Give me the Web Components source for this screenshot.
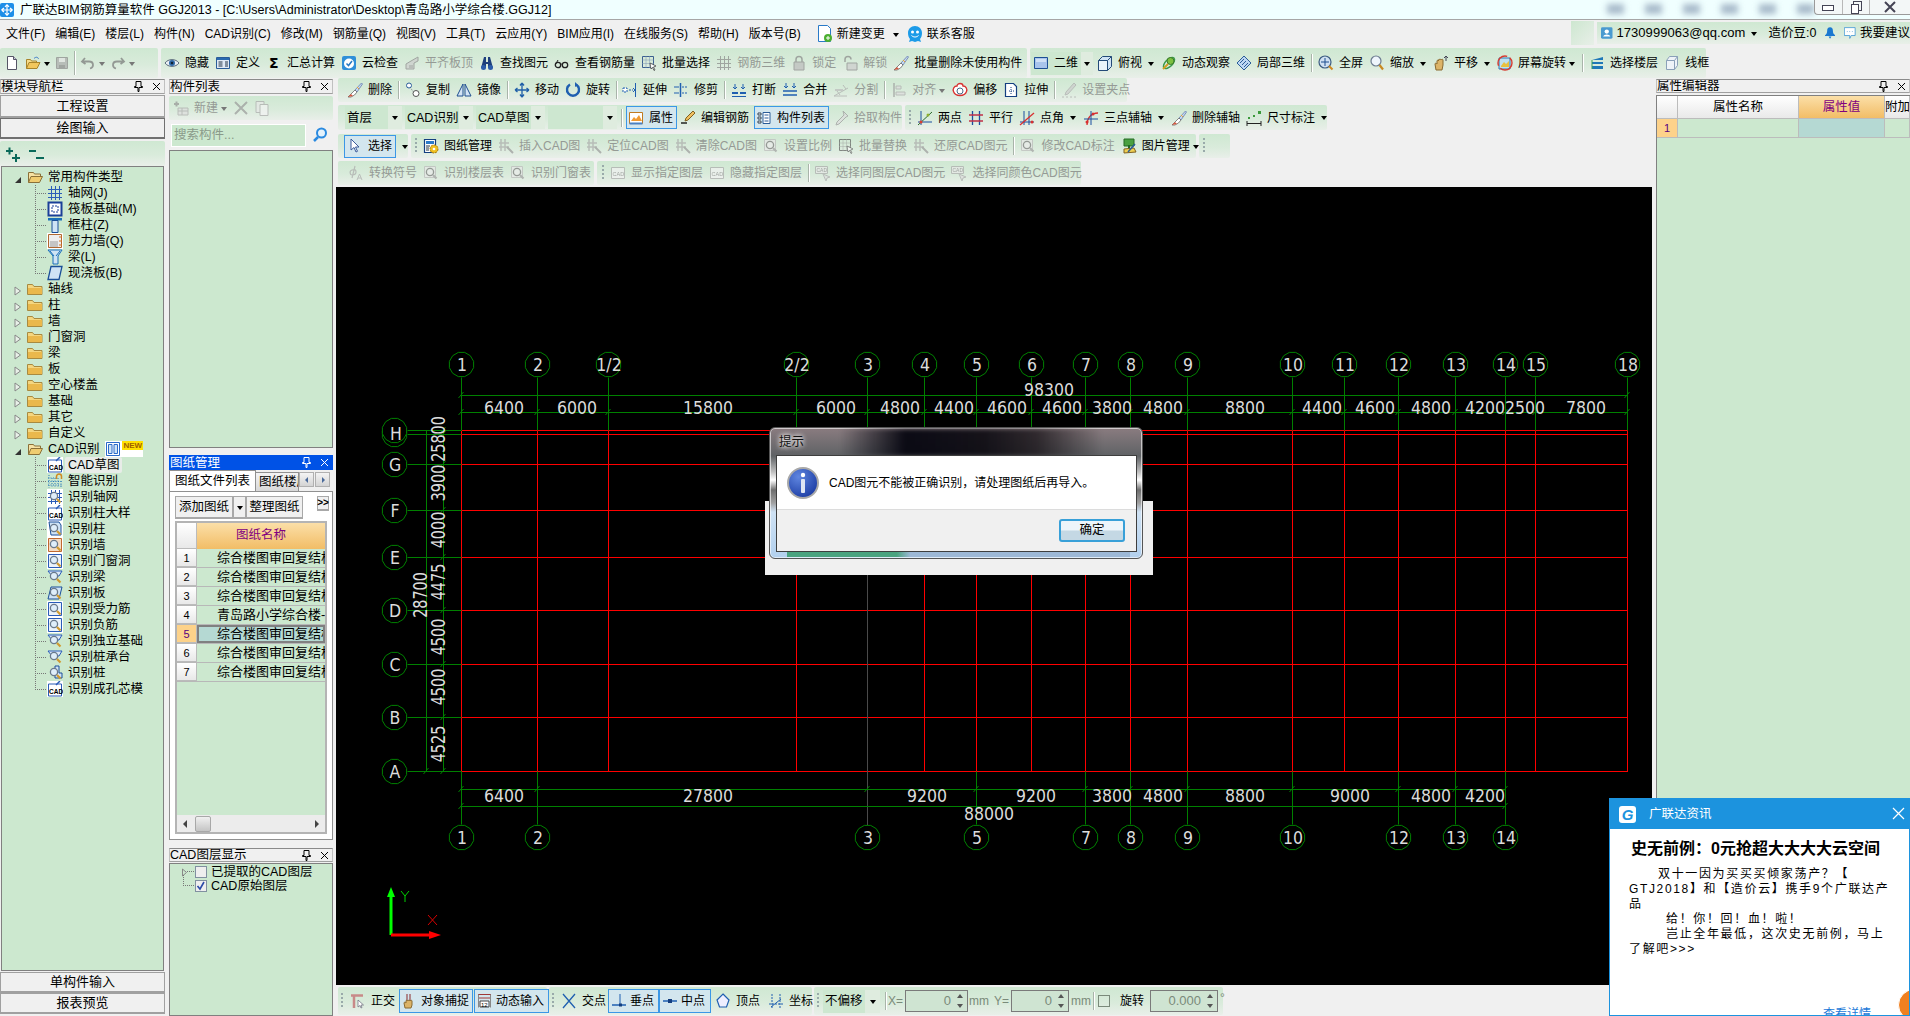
<!DOCTYPE html>
<html lang="zh">
<head>
<meta charset="utf-8">
<title>广联达BIM钢筋算量软件</title>
<style>
	html, body { margin: 0; height: 100%; overflow: hidden; }
	body {
		width: 1910px;
		height: 1016px;
		position: relative;
		background: #f0f0f0;
		color: #000;
		font: 12px/16px "Liberation Sans", "Noto Sans CJK SC", sans-serif;
		display: grid;
		grid-template-rows: 20px 28px 30px 1fr;
	}
</style>
</head>
<body>
<app-title>广联达BIM钢筋算量软件 GGJ2013 - [C:\Users\Administrator\Desktop\青岛路小学综合楼.GGJ12]</app-title>
<app-menu></app-menu>

<tool-row style="padding-top:0">
	<tool-group style="width:158px;padding-left:4px;gap:2px">
		<tool-btn icon="new"></tool-btn>
		<tool-btn icon="open" caret style="margin-left:3px"></tool-btn>
		<tool-btn icon="save" off style="margin-left:1px"></tool-btn>
		<tool-sep style="margin:0 3px 0 2px;height:24px"></tool-sep>
		<tool-btn icon="undo" off caret></tool-btn>
		<tool-btn icon="redo" off caret style="margin-left:2px"></tool-btn>
	</tool-group>
	<tool-group style="width:866px;padding-left:3px">
		<tool-btn icon="eye">隐藏</tool-btn>
		<tool-btn icon="define">定义</tool-btn>
		<tool-btn icon="sigma">汇总计算</tool-btn>
		<tool-btn icon="cloud">云检查</tool-btn>
		<tool-btn icon="level" off>平齐板顶</tool-btn>
		<tool-btn icon="binoc">查找图元</tool-btn>
		<tool-btn icon="glasses">查看钢筋量</tool-btn>
		<tool-btn icon="batch">批量选择</tool-btn>
		<tool-btn icon="rebar" off>钢筋三维</tool-btn>
		<tool-btn icon="lock" off>锁定</tool-btn>
		<tool-btn icon="unlock" off>解锁</tool-btn>
		<tool-btn icon="brush">批量删除未使用构件</tool-btn>
	</tool-group>
	<tool-group style="width:676px;padding-left:1px">
		<tool-combo style="width:62px" tail="12"><tool-btn icon="square">二维</tool-btn></tool-combo>
		<tool-btn icon="cube" caret style="margin-left:-2px">俯视</tool-btn>
		<tool-btn icon="orbit">动态观察</tool-btn>
		<tool-btn icon="local">局部三维</tool-btn>
		<tool-sep></tool-sep>
		<tool-btn icon="full">全屏</tool-btn>
		<tool-btn icon="zoom" caret>缩放</tool-btn>
		<tool-btn icon="hand" caret>平移</tool-btn>
		<tool-btn icon="spin" caret style="--caret:-2px">屏幕旋转</tool-btn>
		<tool-sep></tool-sep>
		<tool-btn icon="floors">选择楼层</tool-btn>
		<tool-btn icon="wire">线框</tool-btn>
	</tool-group>
</tool-row>

<main-area>
	<div slot="left" style="display:contents">
		<dock-head style="margin-top:1px">模块导航栏</dock-head>
		<flat-button style="height:23px;margin-top:1px">工程设置</flat-button>
		<flat-button style="height:21px" dark>绘图输入</flat-button>
		<tool-group style="height:25px;margin-top:2px;padding-left:5px;gap:7px;flex:none">
			<tool-btn icon="plus"></tool-btn>
			<tool-btn icon="minus"></tool-btn>
		</tool-group>
		<nav-tree style="flex:1"></nav-tree>
		<flat-button style="height:21px;margin-top:1px">单构件输入</flat-button>
		<flat-button style="height:21px;margin-bottom:2px">报表预览</flat-button>
	</div>
	<div slot="mid" style="display:contents">
		<dock-head style="margin-top:1px">构件列表</dock-head>
		<tool-group style="height:24px;margin-top:2px;padding-left:4px;flex:none;gap:5px">
			<tool-btn icon="addlist" off caret style="--caret:-2px">新建</tool-btn>
			<tool-btn icon="xgray" off></tool-btn>
			<tool-btn icon="copygray" off></tool-btn>
		</tool-group>
		<search-box></search-box>
		<green-box style="height:298px;margin-top:3px"></green-box>
		<dock-head blue style="margin-top:7px;height:15px">图纸管理</dock-head>
		<drawing-panel></drawing-panel>
		<dock-head style="margin-top:8px;height:14px">CAD图层显示</dock-head>
		<layer-tree style="flex:1;margin-top:1px"></layer-tree>
	</div>
	<div slot="center" style="display:contents">
		<tool-row style="height:24px;margin:0 0 3px 2px">
			<tool-group style="width:789px;padding-left:9px">
				<tool-btn icon="brush">删除</tool-btn>
				<tool-sep></tool-sep>
				<tool-btn icon="copy">复制</tool-btn>
				<tool-btn icon="mirror">镜像</tool-btn>
				<tool-sep></tool-sep>
				<tool-btn icon="move">移动</tool-btn>
				<tool-btn icon="turn">旋转</tool-btn>
				<tool-sep style="margin-right:-1px"></tool-sep>
				<tool-btn icon="extend">延伸</tool-btn>
				<tool-btn icon="trim">修剪</tool-btn>
				<tool-sep></tool-sep>
				<tool-btn icon="cut">打断</tool-btn>
				<tool-btn icon="merge">合并</tool-btn>
				<tool-btn icon="split" off>分割</tool-btn>
				<tool-sep></tool-sep>
				<tool-btn icon="align" off caret style="--caret:-2px">对齐</tool-btn>
				<tool-btn icon="offset">偏移</tool-btn>
				<tool-btn icon="stretch">拉伸</tool-btn>
				<tool-sep></tool-sep>
				<tool-btn icon="pen" off>设置夹点</tool-btn>
			</tool-group>
		</tool-row>
		<tool-row style="height:25px;margin:0 0 4px 2px">
			<tool-group style="width:564px;padding-left:7px;gap:3px">
				<tool-combo style="width:57px">首层</tool-combo>
				<tool-combo style="width:68px">CAD识别</tool-combo>
				<tool-combo style="width:69px">CAD草图</tool-combo>
				<tool-combo style="width:69px"></tool-combo>
				<tool-sep style="margin:0 0 0 1px"></tool-sep>
				<tool-btn icon="prop" on style="margin-left:1px">属性</tool-btn>
				<tool-btn icon="edit" style="margin-left:2px">编辑钢筋</tool-btn>
				<tool-btn icon="list" on style="margin-left:2px">构件列表</tool-btn>
				<tool-btn icon="pick" off style="margin-left:3px">拾取构件</tool-btn>
			</tool-group>
			<tool-group style="width:422px;padding-left:4px">
				<tool-grip></tool-grip>
				<tool-btn icon="twopt">两点</tool-btn>
				<tool-btn icon="para">平行</tool-btn>
				<tool-btn icon="angle" caret>点角</tool-btn>
				<tool-btn icon="arc" caret>三点辅轴</tool-btn>
				<tool-btn icon="brush">删除辅轴</tool-btn>
				<tool-btn icon="dim" caret>尺寸标注</tool-btn>
			</tool-group>
		</tool-row>
		<tool-row style="height:24px;margin:0 0 3px 2px">
			<tool-group style="width:70px;padding-left:6px;gap:3px">
				<tool-btn icon="cursor" on style="margin:0;padding:0 3px 0 2px">选择</tool-btn>
				<span style="width:0;height:0;border:3px solid transparent;border-top:4px solid #000;margin:4px 0 0 3px"></span>
			</tool-group>
			<tool-group style="width:785px;padding-left:4px">
				<tool-grip></tool-grip>
				<tool-btn icon="mgr">图纸管理</tool-btn>
				<tool-btn icon="gcad" off>插入CAD图</tool-btn>
				<tool-btn icon="gcad" off>定位CAD图</tool-btn>
				<tool-btn icon="gcad" off>清除CAD图</tool-btn>
				<tool-btn icon="gscale" off>设置比例</tool-btn>
				<tool-btn icon="batch" off>批量替换</tool-btn>
				<tool-btn icon="gcad" off>还原CAD图元</tool-btn>
				<tool-sep></tool-sep>
				<tool-btn icon="gscale" off>修改CAD标注</tool-btn>
				<tool-btn icon="picmgr" caret style="--caret:-2px">图片管理</tool-btn>
			</tool-group>
			<tool-group style="width:31px;padding-left:4px"><tool-grip></tool-grip></tool-group>
		</tool-row>
		<tool-row style="height:24px;margin:0 0 2px 2px">
			<tool-group style="width:256px;padding-left:10px">
				<tool-btn icon="phi" off>转换符号</tool-btn>
				<tool-btn icon="gscale" off>识别楼层表</tool-btn>
				<tool-btn icon="gscale" off>识别门窗表</tool-btn>
			</tool-group>
			<tool-group style="width:484px;padding-left:5px">
				<tool-grip></tool-grip>
				<tool-btn icon="cadbox" off>显示指定图层</tool-btn>
				<tool-btn icon="cadbox" off>隐藏指定图层</tool-btn>
				<tool-sep></tool-sep>
				<tool-btn icon="cadsel" off>选择同图层CAD图元</tool-btn>
				<tool-btn icon="cadsel" off>选择同颜色CAD图元</tool-btn>
			</tool-group>
		</tool-row>
		<cad-canvas></cad-canvas>
		<status-bar></status-bar>
	</div>
	<div slot="right" style="display:contents">
		<dock-head style="margin-top:1px;height:14px">属性编辑器</dock-head>
		<prop-editor style="flex:1;margin-top:2px"></prop-editor>
	</div>
</main-area>

<msg-dialog>CAD图元不能被正确识别，请处理图纸后再导入。</msg-dialog>
<news-popup></news-popup>

<script>
const mag = base => base + '<circle cx="7" cy="7" r="3.6" fill="#dfeefa" stroke="#6a7a8c" stroke-width="1.3"/><path d="M10 10l3.500 3.500" stroke="#d09a30" stroke-width="2.200"/>';
const hatch = (c) => `<path d="M1 4.500h14M1 8.500h14M1 12.500h14M4.500 1v14M8.500 1v14M12.500 1v14" stroke="${c}" fill="none"/>`;

const ICONS = {
	new: '<path d="M3.500 1.500h6l3 3v10h-9z" fill="#fff" stroke="#556"/><path d="M9.500 1.500v3h3" fill="#ccd" stroke="#556"/>',
	open: '<path d="M1.500 13.500v-9h4l1 1.500h5v2" fill="#f6dc8a" stroke="#a8842a"/><path d="M1.500 13.500l2.500-6h11l-3 6z" fill="#f2c75c" stroke="#a8842a"/><path d="M9 3.500c2-2 4-1.500 4.500.5" fill="none" stroke="#3a7ac8"/>',
	save: '<path d="M2.500 2.500h11v11h-11z" fill="#aaa" stroke="#888"/><path d="M5 3h6v4H5z" fill="#e4e4e4"/><path d="M5 10h6v3H5z" fill="#888"/>',
	undo: '<path d="M5 3L2 6.500 5.500 9M2.500 6.500H9c3 0 4 2 4 3.500s-1 3-3 3.500" fill="none" stroke="#777" stroke-width="1.800"/>',
	redo: '<path d="M11 3l3 3.500L10.500 9M13.500 6.500H7c-3 0-4 2-4 3.500s1 3 3 3.500" fill="none" stroke="#777" stroke-width="1.800"/>',
	eye: '<path d="M1 8c3-4.500 11-4.500 14 0-3 4.500-11 4.500-14 0z" fill="#e9eef3" stroke="#5a6a7a"/><circle cx="8" cy="8" r="3" fill="#2f6aa8"/><circle cx="8" cy="8" r="1.300" fill="#123"/>',
	define: '<path d="M1.500 2.500h13v11h-13z" fill="#dfe9f5" stroke="#2a5c98"/><path d="M2 3h12v2H2z" fill="#2a6ab0"/><path d="M3.500 7h4M3.500 9h4M3.500 11h4M10 7h3M10 9h3M10 11h3" stroke="#234"/>',
	sigma: '<text x="3" y="13" font-size="14" font-weight="700" font-family="DejaVu Sans" fill="#000">Σ</text>',
	cloud: '<path d="M1 3q0-2 2-2h10q2 0 2 2v10q0 2-2 2H3q-2 0-2-2z" fill="#2f8fd8"/><circle cx="8" cy="8.500" r="5" fill="#fff"/><path d="M5.500 8.500l2 2 3.500-4.500" fill="none" stroke="#2878c0" stroke-width="1.500"/>',
	level: '<path d="M2 14V9l5-3 7-4v4l-4 2v6z" fill="#ccc" stroke="#888"/><path d="M5 10h4v4H5z" fill="#aaa"/>',
	binoc: '<path d="M5 2h2v5h2V2h2l3 11h-5V9H7v4H2z" fill="#1d3f7c"/><circle cx="4.500" cy="12.500" r="2.500" fill="#2b5caa"/><circle cx="11.500" cy="12.500" r="2.500" fill="#2b5caa"/>',
	glasses: '<circle cx="4" cy="10" r="2.700" fill="none" stroke="#222" stroke-width="1.300"/><circle cx="11" cy="10" r="2.700" fill="none" stroke="#222" stroke-width="1.300"/><path d="M6.500 9.500c1-.6 1.500-.6 2 0M1.500 9.500L4 5" fill="none" stroke="#222"/>',
	batch: '<path d="M1.500 1.500h11v11h-11z" fill="none" stroke="#3b5f8f"/><path d="M1.500 5h11M1.500 8.500h11M5 1.500v11M8.500 1.500v11" stroke="#7d95b5" stroke-dasharray="1 1"/><path d="M9 8l6 3-2.500 1 1.500 3-1 .5-1.500-3L10 14z" fill="#fff" stroke="#333" stroke-width=".7"/>',
	rebar: hatch('#888'),
	lock: '<path d="M5 7V4.500a3 3 0 016 0V7" fill="none" stroke="#888" stroke-width="1.500"/><path d="M3 7h10v8H3z" fill="#bbb" stroke="#888"/>',
	unlock: '<path d="M3 7V4.500a3 3 0 016 0" fill="none" stroke="#888" stroke-width="1.500"/><path d="M5 8h10v7H5z" fill="#ccc" stroke="#888"/>',
	brush: '<path d="M14.500 1L8 8l2 2 5.500-8z" fill="#c8d8f0" stroke="#5570a8" stroke-width=".7"/><path d="M8 8l2 2-2.500 3L4 15H1l3-3z" fill="#fff" stroke="#555" stroke-width=".7"/><path d="M1 15l3-3 2 2z" fill="#d85a40"/><path d="M10 5l2 2" stroke="#e8a030"/>',
	square: '<path d="M1.500 2.500h13v11h-13z" fill="#a8c4ec" stroke="#1d4f94"/><path d="M3 4h10v3H3z" fill="#cfe0f6"/>',
	cube: '<path d="M1.500 5.500l4-4h9v10l-4 4h-9z" fill="#cfe3f5" stroke="#234a78"/><path d="M1.500 5.500h9v10M10.500 5.500l4-4" fill="none" stroke="#234a78"/><path d="M2 6h8v9H2z" fill="#eaf3fb"/>',
	orbit: '<ellipse cx="8" cy="8" rx="7" ry="3.500" fill="none" stroke="#3a9a4a" stroke-width="1.500" transform="rotate(-45 8 8)"/><circle cx="9.500" cy="6" r="3.500" fill="#7cc040" stroke="#3a7a2a"/><path d="M2 14l5-5" stroke="#d0a020" stroke-width="2"/>',
	local: '<path d="M8 1l7 7-7 7-7-7z" fill="#bcd6f2" stroke="#2a5c98"/><path d="M4 8l4-4M6 10l4-4M8 12l4-4" stroke="#2a5c98"/>',
	full: '<circle cx="7" cy="7" r="6" fill="#cfe0f2" stroke="#3d5c80" stroke-width="1.200"/><path d="M7 3v8M3 7h8" stroke="#1f4f8f"/><path d="M11 11l3.500 3.500" stroke="#d08a20" stroke-width="2"/>',
	zoom: '<circle cx="7" cy="6" r="5" fill="#eef5fc" stroke="#6c7c90" stroke-width="1.200"/><path d="M10.500 10l3.500 4.500" stroke="#c88a20" stroke-width="2.200"/>',
	hand: '<path d="M3 15l-1-6c0-1 1-1 2 0V6c0-1 1-1 1.500 0V5c0-1 1.500-1 1.500 0v0c0-1 1.500-1 1.500 0v0c0-1 1.500-1 1.500 0v5l-1 5z" fill="#dcb468" stroke="#8a6a30"/><path d="M13 1v5M11 3l2-2 2 2" fill="none" stroke="#445"/>',
	spin: '<path d="M2 3h11v11H2z" fill="#bfe0f0" stroke="#2a7ab8"/><path d="M4 11l3-4 2 2 3-3v6H4z" fill="#e8c040"/><circle cx="8" cy="8" r="7" fill="none" stroke="#d83a30" stroke-width="1.400" stroke-dasharray="16 3"/>',
	floors: '<path d="M14 2L3 5h11zM14 7H3v2h11zM14 11H3v3h11z" fill="#1f78b8"/><path d="M3 5v9" stroke="#3aa060"/>',
	wire: '<path d="M2.500 5.500l3-4h8v9l-3 4h-8zM2.500 5.500h8v9M10.500 5.500l3-4" fill="#eef3f8" stroke="#8aa0b8"/>',
	plus: '<path d="M1 5h7M4.500 1.500v7" stroke="#0a6a5a" stroke-width="2"/><path d="M7 12h8M11 8v8" stroke="#0a6a5a" stroke-width="2"/>',
	minus: '<path d="M1 5h7M8 12h8" stroke="#0a6a5a" stroke-width="2"/>',
	addlist: '<path d="M1 4h5M3.500 1.500v5" stroke="#8a9a8a" stroke-width="2"/><path d="M5 8h10v7H5zM5 11h10M9 8v7" fill="#ddd" stroke="#aaa"/>',
	xgray: '<path d="M2 2l12 12M14 2L2 14" stroke="#999" stroke-width="2"/>',
	copygray: '<path d="M2 1.500h8v11H2z" fill="#e8e8e8" stroke="#aaa"/><path d="M6 4.500h8v11H6z" fill="#f4f4f4" stroke="#aaa"/>',
	copy: '<path d="M3 2l8 12" stroke="#889" stroke-dasharray="1 1"/><circle cx="4" cy="3.500" r="2.500" fill="#fff" stroke="#2a5c98"/><circle cx="11" cy="11.500" r="3" fill="#fff" stroke="#555"/>',
	mirror: '<path d="M7 2v12H1zM9 2v12h6z" fill="#d4e4f4" stroke="#1f4f8f"/>',
	move: '<path d="M8 1v14M1 8h14M8 1L6 3.500M8 1l2 2.500M8 15l-2-2.500M8 15l2-2.500M1 8l2.500-2M1 8l2.500 2M15 8l-2.500-2M15 8l-2.500 2" fill="none" stroke="#1f5fa8" stroke-width="1.300"/>',
	turn: '<path d="M5 2.500a6 6 0 106 0" fill="none" stroke="#1f5fb0" stroke-width="2.400"/><path d="M10 0v5l3-2z" fill="#1f5fb0"/>',
	extend: '<path d="M1 6h4v4H1zM7 8h4" fill="#fff" stroke="#1f5fb0" stroke-dasharray="2 1"/><path d="M13.500 1v14" stroke="#1f5fb0"/><path d="M11 6l2 2-2 2" fill="none" stroke="#1f5fb0"/>',
	trim: '<path d="M7.500 1v14" stroke="#1f5fb0" stroke-width="1.500"/><path d="M1 5h5M1 11h5" stroke="#1f5fb0"/><path d="M9 5h6M9 11h6" stroke="#1f5fb0" stroke-dasharray="2 1"/>',
	cut: '<path d="M1 11h6M9 11h6" stroke="#1f5fb0" stroke-width="2"/><path d="M1 14.500h14" stroke="#1f5fb0"/><path d="M4 2v5M12 2v5M2 5l2 2 2-2M10 5l2 2 2-2" fill="none" stroke="#1f5fb0"/>',
	merge: '<path d="M1 9h14M1 13h14" stroke="#1f5fb0" stroke-width="1.500"/><path d="M4 1v5M12 1v5M2 4l2 2 2-2M10 4l2 2 2-2" fill="none" stroke="#1f5fb0"/>',
	split: '<path d="M1 14l14-8M1 14h13M4 9l3 4M10 3l3 4" stroke="#aaa" fill="none"/><path d="M2 8h8" stroke="#bbb" stroke-width="2"/>',
	align: '<path d="M3 1v14" stroke="#999" stroke-width="1.500"/><path d="M5 4h5v3H5zM5 10h9v3H5z" fill="#ddd" stroke="#aaa"/>',
	offset: '<path d="M8 1.500c3 0 3 2.500 3 2.500 3 0 4.500 3 3.500 5.500-1 3-4 4-6.500 4s-5.500-1-6.500-4C.5 7 2 4 5 4c0 0 0-2.500 3-2.500z" fill="#fff" stroke="#d83030" stroke-width="1.300"/><circle cx="8" cy="9" r="3" fill="none" stroke="#4a6a8a"/>',
	stretch: '<path d="M2.500 1.500h8l3 3v10h-11z" fill="#fff" stroke="#143f80" stroke-width="1.200"/><path d="M8 5v8M6 9h5" stroke="#143f80" stroke-dasharray="1 1"/>',
	pen: '<path d="M13 1l2 2-8 9-3 1 1-3z" fill="#ccc" stroke="#aaa"/><path d="M1 15h14" stroke="#aaa" stroke-dasharray="2 2"/>',
	prop: '<path d="M1.500 2.500h13v11h-13z" fill="#fff" stroke="#c07a20"/><path d="M3 11l3-4 2 2 3-4 3 6z" fill="#f09a30"/><path d="M1.500 13.500h13" stroke="#4a80c0" stroke-width="2"/>',
	edit: '<path d="M13 1l2 2-7 7-3 1 1-3z" fill="#f0c060" stroke="#806020"/><path d="M1 13h6" stroke="#222" stroke-width="1.500"/>',
	list: '<path d="M2 3h3v2H2zM2 7h3v2H2zM2 11h3v2H2z" fill="#fff" stroke="#345"/><path d="M7 2.500h7v11H7z" fill="#fff" stroke="#2a5c98"/><path d="M8.500 5h4M8.500 8h4M8.500 11h4" stroke="#2a5c98"/>',
	pick: '<path d="M10 1l5 5-2 1-1 1-6 6-3 1 1-3 6-6 1-1z" fill="#ddd" stroke="#999"/>',
	twopt: '<path d="M1 15L15 2" stroke="#2a6a2a"/><path d="M4 1v14M1 12h14" stroke="#1a4f9f"/><circle cx="4" cy="12" r="1.500" fill="#d84030"/><circle cx="11" cy="5" r="1.500" fill="#90b030"/>',
	para: '<path d="M4.500 1v14M11.500 1v14" stroke="#1a4f9f" stroke-width="1.300"/><path d="M1 5h14M1 11h14" stroke="#c03048" stroke-width="1.300"/>',
	angle: '<path d="M5 1v14M10 1v14M1 12h14" stroke="#1a4f9f"/><path d="M1 15L15 3" stroke="#d83030" stroke-width="1.300"/><circle cx="13" cy="12" r="1.500" fill="#d83030"/>',
	arc: '<path d="M4 15C4 8 8 3 15 3" fill="none" stroke="#d83030" stroke-width="1.300"/><circle cx="4" cy="12" r="1.500" fill="#d83030"/><circle cx="10" cy="4" r="1.500" fill="#d83030"/><path d="M1 9h14M8 1v14" stroke="#1a4f9f"/>',
	dim: '<path d="M1 13.500h14M1 11v5M15 11v5" stroke="#222" fill="none"/><path d="M2 7h2v2H2zM12 1h3v3h-3zM7 5h2v2H7z" fill="#3a9a3a"/>',
	cursor: '<path d="M4 1v11l3-2.500 2 4.500 1.500-.7-2-4.300H12z" fill="#fff" stroke="#3a5a9a"/>',
	mgr: '<path d="M1.500 1.500h11v13h-11z" fill="#fff" stroke="#143f80" stroke-width="1.200"/><path d="M3 3h8v3H3z" fill="#2a7ac8"/><path d="M3 8h4M3 10h3M3 12h3" stroke="#234"/><circle cx="11" cy="11" r="4" fill="#f0c020" stroke="#a87a10" stroke-dasharray="2 1"/><circle cx="11" cy="11" r="1.300" fill="#fff"/>',
	gcad: '<path d="M3 1v12M7 1v12M1 5h10M1 9h10" stroke="#aaa" stroke-width="1.500"/><path d="M9 9l6 6" stroke="#999" stroke-width="2"/>',
	gscale: mag('<path d="M1.500 1.500h11v11h-11z" fill="#e8e8e8" stroke="#bbb"/>') ,
	picmgr: '<path d="M3 1h10v7H3z" fill="#4aa040" stroke="#246a24"/><path d="M8 7v4" stroke="#246a24" stroke-width="2"/><path d="M3 11l10-1 2 4-12 1z" fill="#f0d050" stroke="#806020"/><path d="M7 14l7-8" stroke="#2a5c98" stroke-width="1.500"/>',
	phi: '<path d="M7 1L4 13M4 5c-3 1-2 5 0 5s4-1 4-3-1-3-4-2z" fill="none" stroke="#aaa" stroke-width="1.200"/><path d="M9 15l2.500-6 2.500 6M10 13h3" fill="none" stroke="#aaa"/>',
	cadbox: '<path d="M1.500 2.500h13v11h-13z" fill="#f2f2f2" stroke="#aaa"/><text x="2.500" y="10.500" font-size="5.500" font-family="Liberation Sans" fill="#888">CAD</text>',
	cadsel: '<path d="M.5 1.500h12v7H.5z" fill="#e8e8e8" stroke="#aaa"/><text x="1.500" y="7" font-size="5" font-family="Liberation Sans" fill="#888">CAD</text><path d="M8 9l3 7 1-3 3-1z" fill="#ddd" stroke="#aaa"/>',
	ortho: '<path d="M1 2.500h12" stroke="#c88a88" stroke-width="2.500"/><path d="M4 2v13" stroke="#c88a88" stroke-width="2.500"/><path d="M8 7v7l2-1.500 1 2.500 1-.5-1-2.500h2.500z" fill="#fff" stroke="#667" stroke-width=".7"/>',
	snap: '<path d="M5 1v7M8 1v7" stroke="#8a2a2a"/><path d="M3 15l-1-5c0-1 1-1 2 0V8c0-1 1-1 1.500 0c0-1 1.500-1 1.500 0c0-1 1.500-1 1.500 0c0-1 1.500-1 1.500 0v4l-1 3z" fill="#dcb468" stroke="#8a6a30"/>',
	dyn: '<path d="M1 1.500h13M1 5h13" stroke="#a03838"/><path d="M1.500 1.500v13M13.500 1.500v13" stroke="#888"/><path d="M3 8h9v6H3z" fill="#fff" stroke="#444"/><text x="4" y="13.500" font-size="6" font-family="Liberation Sans">12</text>',
	xpt: '<path d="M2 1l12 14M14 1L2 15" stroke="#1f5fb0" stroke-width="1.300"/>',
	perp: '<path d="M1 12h14" stroke="#1f5fb0" stroke-width="1.500"/><path d="M9 1v11" stroke="#1f5fb0"/><rect x="8" y="10.500" width="3" height="3" fill="#143f80"/>',
	midp: '<path d="M1 8h14" stroke="#1f5fb0" stroke-width="1.500"/><rect x="6" y="6" width="4" height="4" fill="#143f80"/>',
	vertex: '<path d="M8 1l6 6-2.500 7h-7L2 7z" fill="#eef" stroke="#1f5fb0" stroke-width="1.200"/>',
	coord: '<path d="M4 1v14M12 1v14M1 11h14" stroke="#1f5fb0" stroke-dasharray="2 1"/><path d="M3 14l10-8" stroke="#1f5fb0"/>',
	folder: '<path d="M.5 13.500V3.500h5l1.500 2h8v8z" fill="#f4d680" stroke="#a88a40"/><path d="M1 7h14v6H1z" fill="#eab84c"/>',
	folderOpen: '<path d="M1.500 13.500v-10h5l1 1.500h6v2" fill="#f6e2a4" stroke="#8a7038"/><path d="M1.500 13.500l2.500-6h11.500l-3 6z" fill="#f0cc70" stroke="#8a7038"/>',
	grid: '<path d="M1 4.500h14M1 8.500h14M1 12.500h14M4.500 1v14M8.500 1v14M12.500 1v14" stroke="#2a5cb8"/>',
	raft: '<path d="M1.500 1.500h13v13h-13z" fill="#fff" stroke="#1a3f98" stroke-width="2"/><path d="M5 5h6v6H5z" fill="#fff" stroke="#1a3f98" stroke-dasharray="2 1"/>',
	column: '<path d="M1 1h14v2.500h-14z" fill="#1a6fb8"/><path d="M5 3.500h6v12H5z" fill="#cfe3f5" stroke="#1a4f98"/>',
	wall: '<path d="M0 0h16v16H0z" fill="#fff"/><path d="M1.500 1.500h13v13h-13z" fill="#eee" stroke="#b06830"/><path d="M3 8h8v6H3z" fill="#aaa" opacity=".6"/><path d="M12 4h3M12 8h3M12 12h3" stroke="#d87020"/>',
	beam: '<path d="M1 1h14l-4 6v8H6V7z" fill="#cfe3f5" stroke="#1a6fb8"/><path d="M3 2l4 5M13 2L9 7" stroke="#1a6fb8"/>',
	slab: '<path d="M4 1.500h11l-3 13H1z" fill="#cfe3f5" stroke="#1a4f98" stroke-width="1.300"/>',
	layoutnew: '<path d="M1.500 1.500h13v13h-13z" fill="#fff" stroke="#2a6ac8"/><path d="M3.500 3.500h3.500v9H3.500zM9 3.500h3.500v9H9z" fill="#cfe3f5" stroke="#2a6ac8"/>',
	cadtree: '<path d="M0 0h16v16H0z" fill="#fff"/><path d="M1.500 3h13v12h-13z" fill="#fff" stroke="#2a5cb8"/><path d="M9 4l4-4" stroke="#2a5cb8" stroke-width="1.500"/><text x="2" y="12.500" font-size="6.500" font-weight="700" font-family="Liberation Sans">CAD</text>',
	smart: '<path d="M1 5h10M1 8.500h14M1 12h14M2 2v13M5 5v10M8 5v10M11 5v10M14 8v7" stroke="#2a7ab8" stroke-dasharray="1 1.500"/><path d="M9.500 6V3.500a2.500 2.500 0 015 0V6" fill="none" stroke="#d08a20" stroke-width="1.500"/>',
	mgrid: mag('<path d="M0 0h16v16H0z" fill="#fff"/><path d="M1 4.500h14M1 8.500h14M1 12.500h14M4.500 1v14M8.500 1v14M12.500 1v14" stroke="#2a5cb8"/>'),
	mcol: mag('<path d="M0 0h16v16H0z" fill="#fff"/><path d="M2 1h10l2 3v10H4z" fill="#cfe3f5" stroke="#1a4f98"/>'),
	mwall: mag('<path d="M0 0h16v16H0z" fill="#fff"/><path d="M1.500 1.500h13v13h-13z" fill="#f4dcc4" stroke="#c06830"/>'),
	mdoor: mag('<path d="M0 0h16v16H0z" fill="#fff"/><path d="M1.500 1.500h13v13h-13z" fill="#eaf2fb" stroke="#2a5cb8"/>'),
	mbeam: mag('<path d="M1 2h14l-3 5H5z" fill="#dce9f6" stroke="#2a5cb8"/>'),
	mslab: mag('<path d="M4 2h11l-3 12H1z" fill="#cfe3f5" stroke="#1a4f98"/>'),
	mpile: mag('<path d="M8 1h4v7h3v5H8z" fill="#cfe3f5" stroke="#1a4f98"/>')
};

const svgIcon = (name, size = 16) => `<svg width="${size}" height="${size}" viewBox="0 0 16 16" style="display:block;flex:none">${ICONS[name] || ''}</svg>`;
const FONT_STACK = '"Liberation Sans", "Noto Sans CJK SC", sans-serif';
const GREEN = '#cce8cf';
const BAR_BG = 'linear-gradient(180deg, #cfe8d2 0%, #d9ebdb 55%, #e9efe9 100%)';

// small elements that have nothing but a style and a fixed bit of markup
function simple(tag, css, html = '<slot></slot>') {
	customElements.define(tag, class extends HTMLElement {
		constructor() {
			super();
			this.attachShadow({ mode: 'open' });
			this.shadowRoot.innerHTML = `<style>${css}</style>${html}`;
		}
	});
}

simple('tool-row', ':host{display:flex;gap:3px;flex:none}');
simple('tool-group', `:host{display:flex;align-items:center;gap:6px;box-sizing:border-box;flex:none;background:${BAR_BG};border-radius:2px;}`);
simple('tool-sep', ':host{display:block;width:1px;height:18px;background:#a9b4aa;box-shadow:1px 0 #fff;flex:none}');
simple('tool-grip', ':host{display:block;width:2px;height:16px;flex:none;background:repeating-linear-gradient(#9aa 0 2px,transparent 2px 4px)}');
simple('green-box', `:host{display:block;box-sizing:border-box;background:${GREEN};border:1px solid #808080;flex:none}`);
simple('flat-button', `
	:host{display:flex;align-items:center;justify-content:center;box-sizing:border-box;background:#f0f0f0;border:1px solid #a0a0a0;border-bottom-width:2px;font-size:13px;flex:none}
	:host([dark]){border-color:#707070}
`);

class ToolBtn extends HTMLElement {
	constructor() {
		super();
		this.attachShadow({ mode: 'open' });
		const caret = this.hasAttribute('caret') ? '<span class="caret"></span>' : '';
		this.shadowRoot.innerHTML = `
			<style>
				:host { display: inline-flex; align-items: center; gap: 5px; white-space: nowrap; flex: none; font-size: 12px; box-sizing: border-box; }
				:host([off]) { color: #959a95; }
				:host([off]) svg { filter: grayscale(1); opacity: .7; }
				:host([on]) { height: 23px; border: 1px solid #3b97e6; background: #d3e6ee; padding: 0 3px 0 1px; margin: 0 -2px; }
				.caret { width: 0; height: 0; border: 3px solid transparent; border-top: 4px solid #000; margin: 4px 1px 0 var(--caret, 1px); }
			</style>
			${svgIcon(this.getAttribute('icon'))}<slot></slot>${caret}
		`;
		if (!this.textContent.trim()) this.style.gap = '2px';
		if (this.hasAttribute('off') && caret) this.shadowRoot.querySelector('.caret').style.borderTopColor = '#777';
	}
}
customElements.define('tool-btn', ToolBtn);

class ToolCombo extends HTMLElement {
	constructor() {
		super();
		this.attachShadow({ mode: 'open' });
		const tail = this.getAttribute('tail') || 14;
		this.shadowRoot.innerHTML = `
			<style>
				:host { display: flex; height: 23px; flex: none; font-size: 12.500px; box-sizing: border-box; }
				.txt { flex: 1; background: #cde7d0; display: flex; align-items: center; padding-left: 2px; white-space: nowrap; min-width: 0; }
				.drop { width: ${tail}px; background: #dfecdf; display: flex; align-items: center; justify-content: center; flex: none; }
				.drop i { border: 3px solid transparent; border-top: 4px solid #000; margin-top: 4px; }
			</style>
			<div class="txt"><slot></slot></div><div class="drop"><i></i></div>
		`;
	}
}
customElements.define('tool-combo', ToolCombo);

class AppTitle extends HTMLElement {
	constructor() {
		super();
		this.attachShadow({ mode: 'open' });
		this.shadowRoot.innerHTML = `
			<style>
				:host { display: flex; align-items: center; background: #f0ffff; border-bottom: 1px solid #a6a6a6; box-sizing: border-box; position: relative; overflow: hidden; }
				.logo { margin: 0 6px 0 0; }
				.name { font-size: 12.500px; white-space: nowrap; }
				.blur { position: absolute; left: 1607px; top: 4px; display: flex; gap: 21px; filter: blur(3px); }
				.blur i { width: 17px; height: 10px; background: #8fa3b8; opacity: .75; }
				.win { position: absolute; right: 0; top: 0; height: 15px; width: 96px; display: flex; border: 1px solid #9a9a9a; border-top: 0; border-right: 0; border-radius: 0 0 0 4px; background: #f3f7f7; box-sizing: border-box; }
				.win div { display: flex; align-items: center; justify-content: center; border-right: 1px solid #b8b8b8; width: 27px; }
				.win div:last-child { width: 40px; border: 0; }
			</style>
			<svg class="logo" width="14" height="14" viewBox="0 0 14 14"><rect width="14" height="14" rx="2" fill="#1c8fe8"/><path d="M7 1.500v11M1.500 7h11M7 1.500L5 4M7 1.500L9 4M7 12.500L5 10M7 12.500L9 10M1.500 7L4 5M1.500 7L4 9M12.500 7L10 5M12.500 7L10 9" stroke="#fff" stroke-width="1.200" fill="none"/></svg>
			<span class="name"><slot></slot></span>
			<div class="blur"><i></i><i></i><i></i><i></i><i></i><i></i></div>
			<div class="win">
				<div><svg width="12" height="8"><rect x=".5" y="2.500" width="11" height="5" fill="#fff" stroke="#445"/></svg></div>
				<div><svg width="12" height="13"><rect x="3.500" y=".5" width="8" height="9" fill="none" stroke="#445"/><rect x="1.500" y="3.500" width="7" height="9" fill="#fff" stroke="#445"/></svg></div>
				<div><svg width="12" height="12"><path d="M1 1l10 10M11 1L1 11" stroke="#445" stroke-width="2"/></svg></div>
			</div>
		`;
	}
}
customElements.define('app-title', AppTitle);

class AppMenu extends HTMLElement {
	constructor() {
		super();
		this.attachShadow({ mode: 'open' });
		const items = ['文件(F)', '编辑(E)', '楼层(L)', '构件(N)', 'CAD识别(C)', '修改(M)', '钢筋量(Q)', '视图(V)', '工具(T)', '云应用(Y)', 'BIM应用(I)', '在线服务(S)', '帮助(H)', '版本号(B)'];
		this.shadowRoot.innerHTML = `
			<style>
				:host { display: flex; align-items: center; padding-left: 6px; gap: 10px; font-size: 12px; white-space: nowrap; position: relative; }
				.i { display: flex; align-items: center; gap: 4px; }
				.caret { border: 3px solid transparent; border-top: 4px solid #000; margin: 4px 0 0 4px; }
				.user { position: absolute; left: 1571px; top: 1px; right: 0; height: 24px; display: flex; align-items: center; font-size: 12px; }
				.pad { width: 23px; height: 24px; background: linear-gradient(135deg,#cde7d0,#e8efe8); margin-right: 3px; }
				.acct { flex: 1; height: 22px; display: flex; align-items: center; background: ${BAR_BG}; overflow: hidden; padding-left: 4px; }
				.mail { font-size: 13px; margin: 0 0 0 4px; letter-spacing: .05px; }
			</style>
			${items.map(t => `<span>${t}</span>`).join('')}
			<span class="i" style="margin-left:6px;gap:4px">
				<svg width="16" height="20" viewBox="0 0 16 20"><path d="M1.500 1.500h9l3 3v13h-12z" fill="#fff" stroke="#2a7ac8"/><circle cx="11" cy="14" r="4" fill="#4caf30"/><path d="M9 14h4M11 12v4" stroke="#fff"/></svg>新建变更<i class="caret"></i>
			</span>
			<span class="i" style="margin-left:-2px">
				<svg width="16" height="18" viewBox="0 0 16 18"><path d="M8 1c4 0 7 3 7 7 0 3-1 5-2 6l1 3-3-1-3 1-3-1-3 1 1-3C2 13 1 11 1 8c0-4 3-7 7-7z" fill="#1c9be8"/><circle cx="5.500" cy="7" r="1.500" fill="#fff"/><circle cx="10.500" cy="7" r="1.500" fill="#fff"/><path d="M4.500 10.500c2 2 5 2 7 0" fill="none" stroke="#fff"/></svg>联系客服
			</span>
			<div class="user">
				<div class="pad"></div>
				<div class="acct">
					<svg width="16" height="16" viewBox="0 0 16 16"><rect width="16" height="16" rx="2" fill="#4a9ad0"/><circle cx="8" cy="6" r="3" fill="#fff"/><path d="M3 13c1-4 9-4 10 0z" fill="#fff"/></svg>
					<span class="mail">1730999063@qq.com</span>
					<i class="caret" style="margin:4px 11px 0 6px"></i>
					<span style="font-size:12.500px">造价豆:0</span>
					<svg style="margin-left:9px" width="14" height="18" viewBox="0 0 14 18"><path d="M7 1c3 0 4 2 4 5 0 3 1 5 3 6v1H0v-1c2-1 3-3 3-6 0-3 1-5 4-5zM5 14h4l-2 3z" fill="#1a78d0"/></svg>
					<svg style="margin-left:9px" width="16" height="18" viewBox="0 0 16 18"><path d="M.5 1.500h15v11H10l-2 4v-4H.5z" fill="#fff" stroke="#2a8ad0"/><path d="M4 7h1M7.500 7h1M11 7h1" stroke="#2a8ad0"/></svg>
					<span style="margin-left:4px;font-size:12.500px">我要建议</span>
				</div>
			</div>
		`;
	}
}
customElements.define('app-menu', AppMenu);

class MainArea extends HTMLElement {
	constructor() {
		super();
		this.attachShadow({ mode: 'open' });
		this.shadowRoot.innerHTML = `
			<style>
				:host { display: grid; grid-template-columns: 165px 171px 1316px 258px; min-height: 0; }
				.col { display: flex; flex-direction: column; min-height: 0; min-width: 0; }
				.mid { margin: 0 3px 0 4px; }
				.right { margin-left: 4px; }
			</style>
			<div class="col left"><slot name="left"></slot></div>
			<div class="col mid"><slot name="mid"></slot></div>
			<div class="col center"><slot name="center"></slot></div>
			<div class="col right"><slot name="right"></slot></div>
		`;
	}
}
customElements.define('main-area', MainArea);

class DockHead extends HTMLElement {
	constructor() {
		super();
		this.attachShadow({ mode: 'open' });
		this.shadowRoot.innerHTML = `
			<style>
				:host { display: flex; align-items: center; justify-content: space-between; box-sizing: border-box; height: 15px; flex: none; background: #f0f0f0; border-top: 1px solid #8a8a8a; border-left: 1px solid #c0c0c0; border-right: 1px solid #c0c0c0; border-bottom: 1px solid #a0a0a0; font-size: 12.500px; overflow: hidden; white-space: nowrap; }
				:host([blue]) { background: #0052e6; color: #fff; border-color: #0052e6; }
				.b { display: flex; gap: 9px; align-items: center; padding-right: 3px; color: inherit; background: inherit; }
				svg { display: block; }
			</style>
			<span><slot></slot></span>
			<span class="b">
				<svg width="9" height="11" viewBox="0 0 9 11"><path d="M2 .5h5v5h1.500v1h-3.500v4h-1v-4H.5v-1H2z" fill="none" stroke="currentColor"/></svg>
				<svg width="9" height="9" viewBox="0 0 9 9"><path d="M1 1l7 7M8 1L1 8" stroke="currentColor"/></svg>
			</span>
		`;
	}
}
customElements.define('dock-head', DockHead);

class TreeNode extends HTMLElement {
	constructor() {
		super();
		this.attachShadow({ mode: 'open' });
		const lvl = this.getAttribute('lvl') || '1';
		const kind = this.getAttribute('kind') || '';
		const expander = lvl === '1'
			? (kind === 'open' ? '<i class="exp"><svg width="8" height="8"><path d="M7 1v6H1z" fill="#333"/></svg></i>' : '<i class="exp"><svg width="8" height="10"><path d="M1 1l5.500 4L1 9z" fill="#e8f0e8" stroke="#888"/></svg></i>')
			: '';
		const icon = kind === 'open' ? 'folderOpen' : (this.getAttribute('icon') || 'folder');
		this.shadowRoot.innerHTML = `
			<style>
				:host { display: flex; align-items: center; height: 16px; font-size: 12.500px; white-space: nowrap; box-sizing: border-box; padding-left: 25px; position: relative; }
				:host([lvl="2"]) { padding-left: 45px; background:
					repeating-linear-gradient(#777 0 1px, transparent 1px 2px) 33px 0 / 1px 100% no-repeat,
					repeating-linear-gradient(90deg, #777 0 1px, transparent 1px 2px) 33px 8px / 12px 1px no-repeat; }
				:host([last]) { background:
					repeating-linear-gradient(#777 0 1px, transparent 1px 2px) 33px 0 / 1px 9px no-repeat,
					repeating-linear-gradient(90deg, #777 0 1px, transparent 1px 2px) 33px 8px / 12px 1px no-repeat; }
				.exp { position: absolute; left: 12px; top: 3px; }
				.t { margin-left: 5px; }
				:host([sel]) .t { background: #e8ece8; border-radius: 2px; padding: 0 3px; margin-left: 2px; }
			</style>
			${expander}${svgIcon(icon)}<span class="t"><slot></slot></span><slot name="extra"></slot>
		`;
	}
}
customElements.define('tree-node', TreeNode);

class NavTree extends HTMLElement {
	constructor() {
		super();
		this.attachShadow({ mode: 'open' });
		const child = (items, sel) => items.map(([icon, text], i) => `<tree-node lvl="2" icon="${icon}"${i === items.length - 1 ? ' last' : ''}${text === sel ? ' sel' : ''}>${text}</tree-node>`).join('');
		const folders = ['轴线', '柱', '墙', '门窗洞', '梁', '板', '空心楼盖', '基础', '其它', '自定义'];
		this.shadowRoot.innerHTML = `
			<style>
				:host { display: block; box-sizing: border-box; background: ${GREEN}; border: 1px solid #808080; margin-left: 1px; width: 163px; padding-top: 2px; overflow: hidden; min-height: 0; }
				.new { display: flex; background: #fff; align-items: flex-start; gap: 1px; padding-left: 0; margin-left: 6px; }
				.new b { font: 700 8px/9px "Liberation Sans"; background: #ffe000; color: #a06000; padding: 0 1px; letter-spacing: 0; }
			</style>
			<tree-node kind="open">常用构件类型</tree-node>
			${child([['grid', '轴网(J)'], ['raft', '筏板基础(M)'], ['column', '框柱(Z)'], ['wall', '剪力墙(Q)'], ['beam', '梁(L)'], ['slab', '现浇板(B)']])}
			${folders.map(t => `<tree-node>${t}</tree-node>`).join('')}
			<tree-node kind="open">CAD识别<span slot="extra" class="new">${svgIcon('layoutnew')}<b>NEW</b></span></tree-node>
			${child([['cadtree', 'CAD草图'], ['smart', '智能识别'], ['mgrid', '识别轴网'], ['cadtree', '识别柱大样'], ['mcol', '识别柱'], ['mwall', '识别墙'], ['mdoor', '识别门窗洞'], ['mbeam', '识别梁'], ['mslab', '识别板'], ['mdoor', '识别受力筋'], ['mdoor', '识别负筋'], ['mbeam', '识别独立基础'], ['mbeam', '识别桩承台'], ['mpile', '识别桩'], ['cadtree', '识别成孔芯模']], 'CAD草图')}
		`;
	}
}
customElements.define('nav-tree', NavTree);

class SearchBox extends HTMLElement {
	constructor() {
		super();
		this.attachShadow({ mode: 'open' });
		this.shadowRoot.innerHTML = `
			<style>
				:host { display: flex; align-items: center; height: 24px; margin-top: 3px; flex: none; background: #f0f0f0; }
				.in { width: 135px; height: 23px; margin-left: 2px; box-sizing: border-box; border: 1px solid #fff; background: ${GREEN}; color: #8a9a8a; font-size: 12.500px; line-height: 21px; padding-left: 2px; }
				svg { margin-left: 6px; }
			</style>
			<div class="in">搜索构件...</div>
			<svg width="16" height="16" viewBox="0 0 16 16"><circle cx="9.500" cy="6" r="4.500" fill="#e4f2fc" stroke="#2a8ae0" stroke-width="2"/><path d="M6 10l-4 4" stroke="#2a8ae0" stroke-width="2.500"/></svg>
		`;
	}
}
customElements.define('search-box', SearchBox);

class DrawingPanel extends HTMLElement {
	constructor() {
		super();
		this.attachShadow({ mode: 'open' });
		const rows = ['综合楼图审回复结构施工图', '综合楼图审回复结构施工图', '综合楼图审回复结构施工图', '青岛路小学综合楼-建筑施工图', '综合楼图审回复结构施工图', '综合楼图审回复结构施工图', '综合楼图审回复结构施工图'];
		this.shadowRoot.innerHTML = `
			<style>
				:host { display: flex; flex-direction: column; flex: none; height: 370px; font-size: 12.500px; box-sizing: border-box; }
				.tabs { display: flex; height: 21px; align-items: flex-end; }
				.t1 { width: 87px; height: 21px; background: #fff; border: 1px solid #909090; border-bottom: 0; box-sizing: border-box; text-align: center; line-height: 20px; }
				.t2 { width: 43px; height: 19px; border-top: 1px solid #909090; border-right: 1px solid #909090; background: linear-gradient(#f4f4f4,#d8d8d8); box-sizing: border-box; line-height: 18px; overflow: hidden; white-space: nowrap; padding-left: 3px; }
				.arrows { width: 34px; height: 19px; display: flex; gap: 1px; background: #f0f0f0; align-self: flex-start; padding-top: 2px; box-sizing: border-box; }
				.arrows span { width: 15px; height: 15px; box-sizing: border-box; border: 1px solid #b0b0b0; background: linear-gradient(#f4f4f4,#d4d4d4); display: flex; align-items: center; justify-content: center; }
				.arrows i { border: 3.500px solid transparent; }
				.body { flex: 1; border: 1px solid #909090; background: #fff; padding: 4px 5px 5px; box-sizing: border-box; display: flex; flex-direction: column; }
				.bar { display: flex; height: 23px; align-items: stretch; flex: none; margin-bottom: 2px; position: relative; }
				.bb { border: 1px solid #a8a8a8; border-bottom-width: 2px; background: #f0f0f0; display: flex; align-items: center; justify-content: center; box-sizing: border-box; }
				.grid { flex: 1; border: 2px solid #b4b4b4; display: flex; flex-direction: column; background: ${GREEN}; min-height: 0; overflow: hidden; }
				.hd { display: flex; height: 26px; flex: none; }
				.corner { width: 20px; flex: none; background: linear-gradient(#fff,#e8e8e8); border-right: 1px solid #bbb; border-bottom: 1px solid #bbb; display: flex; align-items: center; justify-content: center; box-sizing: border-box; }
				.hc { flex: 1; background: linear-gradient(#fbdfa8,#f2bd66); color: #800080; text-align: center; line-height: 25px; font-size: 12.500px; }
				.row { display: flex; height: 19px; flex: none; border-bottom: 1px solid #b8b8b8; box-sizing: border-box; }
				.row .corner { font-size: 11px; }
				.row .c { flex: 1; padding-left: 20px; white-space: nowrap; overflow: hidden; line-height: 18px; font-size: 13px; }
				.row.sel .corner { background: #fdd28a; color: #550080; }
				.row.sel .c { background: #b5d9d3; outline: 2px solid #808080; outline-offset: -2px; }
				.spacer { flex: 1; }
				.scroll { height: 17px; flex: none; background: #ececec; position: relative; display: flex; align-items: center; justify-content: space-between; padding: 0 8px; }
				.scroll i { border: 4px solid transparent; }
				.thumb { position: absolute; left: 18px; top: 1px; width: 14px; height: 14px; border: 1px solid #a8a8a8; border-radius: 2px; background: linear-gradient(#f0f0f0,#c4c4c4); }
			</style>
			<div class="tabs">
				<div class="t1">图纸文件列表</div>
				<div class="t2">图纸楼层</div>
				<div class="arrows">
					<span><i style="border-right-color:#4a6a9a;margin-left:-4px"></i></span>
					<span><i style="border-left-color:#4a6a9a;margin-right:-4px"></i></span>
				</div>
			</div>
			<div class="body">
				<div class="bar">
					<div class="bb" style="width:58px">添加图纸</div>
					<div class="bb" style="width:13px"><i style="border:3px solid transparent;border-top:4px solid #000;margin-top:4px"></i></div>
					<div class="bb" style="width:57px">整理图纸</div>
					<div class="bb" style="width:12px;position:absolute;left:142px;align-items:flex-start;font-size:10px;font-weight:700;line-height:12px">&gt;&gt;</div>
				</div>
				<div class="grid">
					<div class="hd"><div class="corner"></div><div class="hc">图纸名称</div></div>
					${rows.map((r, i) => `<div class="row${i === 4 ? ' sel' : ''}"><div class="corner">${i + 1}</div><div class="c">${r}</div></div>`).join('')}
					<div class="spacer"></div>
					<div class="scroll">
						<i style="border-right-color:#444;margin-left:-6px"></i>
						<div class="thumb"></div>
						<i style="border-left-color:#444;margin-right:-6px"></i>
					</div>
				</div>
			</div>
		`;
	}
}
customElements.define('drawing-panel', DrawingPanel);

class LayerTree extends HTMLElement {
	constructor() {
		super();
		this.attachShadow({ mode: 'open' });
		const box = c => `<svg width="12" height="12" viewBox="0 0 12 12" style="flex:none"><rect x=".5" y=".5" width="11" height="11" fill="#eee" stroke="#8090a0"/>${c ? '<path d="M2.500 6l2.500 3 4-7" fill="none" stroke="#2a4aa8" stroke-width="1.600"/>' : ''}</svg>`;
		this.shadowRoot.innerHTML = `
			<style>
				:host { display: block; box-sizing: border-box; background: ${GREEN}; border: 1px solid #808080; padding-top: 1px; font-size: 12.500px; white-space: nowrap; min-height: 0; }
				.r { display: flex; align-items: center; height: 14px; padding-left: 25px; gap: 4px; position: relative; }
				.r::before { content: ""; position: absolute; left: 13px; top: 6px; width: 11px; height: 1px; background: repeating-linear-gradient(90deg,#777 0 1px,transparent 1px 2px); }
				.tri { position: absolute; left: 12px; top: 3px; }
				.v { position: absolute; left: 13px; top: -4px; width: 1px; height: 11px; background: repeating-linear-gradient(#777 0 1px,transparent 1px 2px); }
			</style>
			<div class="r"><svg class="tri" width="6" height="9"><path d="M.5 1l4 3.500-4 3.500z" fill="${GREEN}" stroke="#888"/></svg>${box(false)}已提取的CAD图层</div>
			<div class="r"><i class="v"></i>${box(true)}CAD原始图层</div>
		`;
	}
}
customElements.define('layer-tree', LayerTree);

class PropEditor extends HTMLElement {
	constructor() {
		super();
		this.attachShadow({ mode: 'open' });
		this.shadowRoot.innerHTML = `
			<style>
				:host { display: block; box-sizing: border-box; background: ${GREEN}; border: 1px solid #808080; border-width: 1px 0 0 1px; overflow: hidden; min-height: 0; }
				.g { display: grid; grid-template-columns: 21px 121px 86px 1fr; grid-template-rows: 23px 19px; font-size: 12.500px; white-space: nowrap; }
				.g div { box-sizing: border-box; border-right: 1px solid #bcbcbc; border-bottom: 1px solid #bcbcbc; text-align: center; line-height: 22px; overflow: hidden; }
				.w { background: linear-gradient(#fff,#e9e9e9); }
				.o { background: linear-gradient(#fbdfa8,#f2bd66); color: #800080; }
				.g .n { background: #fdd28a; color: #550080; line-height: 18px; font-size: 11px; }
				.s { background: #b5d9d3; }
			</style>
			<div class="g">
				<div class="w"></div><div class="w">属性名称</div><div class="o">属性值</div><div class="w" style="text-align:left">附加</div>
				<div class="n">1</div><div></div><div class="s"></div><div></div>
			</div>
		`;
	}
}
customElements.define('prop-editor', PropEditor);

class CadCanvas extends HTMLElement {
	constructor() {
		super();
		this.attachShadow({ mode: 'open' });
		const top = { '1': 461, '2': 537, '1/2': 608, '2/2': 796, '3': 867, '4': 924, '5': 976, '6': 1031, '7': 1085, '8': 1130, '9': 1187, '10': 1292, '11': 1344, '12': 1398, '13': 1455, '14': 1505, '15': 1535, '18': 1627 };
		const bottom = ['1', '2', '3', '5', '7', '8', '9', '10', '12', '13', '14'];
		const rows = { H: 430, G: 464, F: 510, E: 557, D: 610, C: 664, B: 717, A: 771 };
		const topDims = [[504, 6400], [577, 6000], [708, 15800], [836, 6000], [900, 4800], [954, 4400], [1007, 4600], [1062, 4600], [1112, 3800], [1163, 4800], [1245, 8800], [1322, 4400], [1375, 4600], [1431, 4800], [1485, 4200], [1525, 2500], [1586, 7800]];
		const botDims = [[504, 6400], [708, 27800], [927, 9200], [1036, 9200], [1112, 3800], [1163, 4800], [1245, 8800], [1350, 9000], [1431, 4800], [1485, 4200]];
		const sideDims = [[439, 25800], [483, 3900], [530, 4000], [582, 4475], [637, 4500], [687, 4500], [744, 4525]];
		const green = [], red = [], gray = [];
		const bubbles = [];
		const texts = [];

		const seg = (list, x1, y1, x2, y2) => list.push(`M${x1 + .5} ${y1 + .5}L${x2 + .5} ${y2 + .5}`);
		const bubble = (cx, cy, label) => {
			const pts = [];
			for (let i = 0; i < 12; i++) {
				const a = (i * 30 + 15) * Math.PI / 180;
				pts.push(`${(cx + .5 + 12.5 * Math.cos(a)).toFixed(1)},${(cy + .5 + 12.5 * Math.sin(a)).toFixed(1)}`);
			}
			bubbles.push(`<polygon points="${pts.join(' ')}"/>`);
			if (label) texts.push(`<text x="${cx + 1}" y="${cy + 7}" text-anchor="middle">${label}</text>`);
		};
		const tick = (x, y) => green.push(`M${x - 2.5} ${y + 3}L${x + 2.5} ${y - 3}`);

		Object.entries(top).forEach(([label, x]) => {
			bubble(x, 364, label);
			seg(green, x, 377, x, 430);
			seg(label === '3' ? gray : red, x, 430, x, 771);
			tick(x, 412);
			if (bottom.includes(label)) {
				seg(label === '3' ? gray : green, x, 771, x, 824);
				bubble(x, 837, label);
				tick(x, 789);
			}
		});
		seg(green, 461, 395, 1627, 395);
		seg(green, 461, 412, 1627, 412);
		tick(461, 395);
		tick(1627, 395);
		seg(green, 461, 789, 1505, 789);
		seg(green, 461, 806, 1505, 806);
		tick(461, 806);
		tick(1505, 806);

		Object.entries(rows).forEach(([label, y]) => {
			if (label === 'H') {
				bubble(394, 434, '');
				seg(green, 407, 434, 461, 434);
				seg(red, 461, 434, 1627, 434);
				tick(443, 434);
				bubble(394, y, '');
				texts.push('<text x="396" y="440" text-anchor="middle">H</text>');
			} else {
				bubble(394, y, label);
			}
			seg(green, 407, y, 461, y);
			seg(red, 461, y, 1627, y);
			tick(443, y);
		});
		seg(green, 426, 430, 426, 771);
		seg(green, 443, 430, 443, 771);
		tick(426, 771);

		const side = (x, y, v) => `<text class="r" transform="translate(${x} ${y}) rotate(-90) scale(1 1.2)" text-anchor="middle">${v}</text>`;
		topDims.forEach(([x, v]) => texts.push(`<text x="${x}" y="414" text-anchor="middle">${v}</text>`));
		botDims.forEach(([x, v]) => texts.push(`<text x="${x}" y="802" text-anchor="middle">${v}</text>`));
		sideDims.forEach(([y, v]) => texts.push(side(445, y, v)));
		texts.push('<text x="1049" y="396" text-anchor="middle">98300</text>');
		texts.push('<text x="989" y="820" text-anchor="middle">88000</text>');
		texts.push(side(427, 595, 28700));

		this.shadowRoot.innerHTML = `
			<style>
				:host { display: block; background: #000; flex: 1; min-height: 0; overflow: hidden; }
				svg { display: block; width: 100%; height: 100%; }
				text { font: 17.500px "DejaVu Sans", sans-serif; fill: #dcdcdc; font-stretch: condensed; }
				text.r { font-size: 16px; }
			</style>
			<svg viewBox="336 187 1316 798" preserveAspectRatio="xMinYMin slice">
				<path d="${red.join('')}" stroke="#ff0000" fill="none" shape-rendering="crispEdges"/>
				<path d="${gray.join('')}" stroke="#4a4a4a" fill="none" shape-rendering="crispEdges"/>
				<path d="${green.join('')}" stroke="#008000" fill="none"/>
				<g fill="#000" stroke="#008000">${bubbles.join('')}</g>
				${texts.join('')}
				<path d="M391 935V893" stroke="#00ff00" stroke-width="3"/>
				<path d="M391 887l-4 10h8z" fill="#00ff00"/>
				<path d="M391 935h40" stroke="#ff0000" stroke-width="3"/>
				<path d="M441 935l-12-4v8z" fill="#ff0000"/>
				<path d="M401 891l4 5 4-5M405 896v6" stroke="#00d000" fill="none"/>
				<path d="M428 915l9 10M437 915l-9 10" stroke="#d80000" fill="none"/>
			</svg>
		`;
	}
}
customElements.define('cad-canvas', CadCanvas);

class SpinInput extends HTMLElement {
	constructor() {
		super();
		this.attachShadow({ mode: 'open' });
		this.shadowRoot.innerHTML = `
			<style>
				:host { display: flex; align-items: center; justify-content: flex-end; height: 22px; box-sizing: border-box; border: 1px solid #7a7a7a; color: #7a8a7a; font-size: 13px; padding-right: 16px; position: relative; flex: none; background: #cfe4d2; }
				i { position: absolute; right: 4px; border: 3px solid transparent; }
				.u { top: 0; border-bottom: 4px solid #555; }
				.d { bottom: 0; border-top: 4px solid #555; }
			</style>
			<slot></slot><i class="u"></i><i class="d"></i>
		`;
	}
}
customElements.define('spin-input', SpinInput);

class StatusBar extends HTMLElement {
	constructor() {
		super();
		this.attachShadow({ mode: 'open' });
		this.shadowRoot.innerHTML = `
			<style>
				:host { display: flex; gap: 2px; height: 31px; padding: 2px 0 0 2px; box-sizing: border-box; flex: none; font-size: 12px; white-space: nowrap; }
				.gray { color: #7a8a7a; }
				tool-group { height: 28px; }
				tool-btn[on] { margin: 0; padding: 0 1px 0 2px; height: 24px; gap: 3px; }
			</style>
			<tool-group style="width:209px;padding-left:3px;gap:2px">
				<tool-grip></tool-grip>
				<tool-btn icon="ortho" style="margin-left:5px;gap:5px">正交</tool-btn>
				<tool-btn icon="snap" on style="margin-left:2px;width:74px">对象捕捉</tool-btn>
				<tool-btn icon="dyn" on style="margin-left:-1px;width:75px">动态输入</tool-btn>
			</tool-group>
			<tool-group style="width:263px;padding-left:3px;gap:2px">
				<tool-grip></tool-grip>
				<tool-btn icon="xpt" style="margin-left:5px">交点</tool-btn>
				<tool-btn icon="perp" on style="width:51px">垂点</tool-btn>
				<tool-btn icon="midp" on style="margin-left:-2px;width:52px">中点</tool-btn>
				<tool-btn icon="vertex" style="margin-left:2px">顶点</tool-btn>
				<tool-btn icon="coord" style="margin-left:6px">坐标</tool-btn>
			</tool-group>
			<tool-group style="width:409px;padding-left:3px;gap:2px">
				<tool-grip></tool-grip>
				<tool-combo style="width:57px;margin-left:2px" tail="15">不偏移</tool-combo>
				<tool-sep style="margin-left:3px"></tool-sep>
				<span class="gray">X=</span>
				<spin-input style="width:63px">0</spin-input>
				<span class="gray" style="margin-left:-1px">mm</span><span class="gray" style="margin-left:3px">Y=</span>
				<spin-input style="width:58px">0</spin-input>
				<span class="gray">mm</span>
				<tool-sep></tool-sep>
				<svg width="12" height="12" style="flex:none;margin-left:2px"><rect x=".5" y=".5" width="11" height="11" fill="none" stroke="#7a8a7a"/></svg>
				<span style="margin-left:8px">旋转</span>
				<spin-input style="width:68px;margin-left:4px">0.000</spin-input>
				<span class="gray" style="margin-top:-6px">°</span>
			</tool-group>
		`;
	}
}
customElements.define('status-bar', StatusBar);

class MsgDialog extends HTMLElement {
	constructor() {
		super();
		this.attachShadow({ mode: 'open' });
		this.shadowRoot.innerHTML = `
			<style>
				:host { position: absolute; left: 765px; top: 427px; width: 388px; height: 148px; display: block; font-size: 12px; }
				.back { position: absolute; left: 0; top: 74px; right: 0; bottom: 0; background: #f0f0f0; }
				.frame { position: absolute; left: 4px; top: 0; width: 374px; height: 132px; box-sizing: border-box; border: 1px solid #555; border-radius: 6px; overflow: hidden;
					background: linear-gradient(180deg, #8a7c80 0, #5f6265 28px, #c0c0c0 44px, #fff 52px, #6e6e6e 62px, #a0a0a0 75px, #cfe2f4 84px, #b2d0ee 100%); box-shadow: inset 0 0 0 1px rgba(255,255,255,.6); }
				.dark { position: absolute; left: 70px; right: 40px; top: 1px; height: 27px; background: linear-gradient(90deg, rgba(5,5,10,0), rgba(5,5,15,.95) 25%, rgba(10,8,15,.9) 55%, rgba(20,15,20,.75) 75%, rgba(0,0,0,0)); filter: blur(2px); }
				.cap { position: absolute; left: 6px; top: 6px; padding: 0 3px; line-height: 16px; font-size: 12.500px; color: #111; text-shadow: 0 0 5px #fff, 0 0 5px #fff; }
				.glass { position: absolute; left: 17px; right: 12px; bottom: 1px; height: 5px; background: linear-gradient(90deg, #4aa37f 0, #4aa37f 32%, #9db8d6 36%, #9db8d6 100%); }
				.inner { position: absolute; left: 6px; top: 27px; width: 361px; height: 97px; box-sizing: border-box; border: 1px solid #3e3e3e; background: #f0f0f0; display: flex; flex-direction: column; }
				.msg { height: 53px; background: #fff; border-bottom: 1px solid #dcdcdc; display: flex; align-items: center; padding-left: 10px; gap: 10px; flex: none; color: #000; white-space: nowrap; font-size: 12px; }
				.foot { flex: 1; display: flex; justify-content: flex-end; align-items: center; padding-right: 11px; }
				.ok { width: 66px; height: 23px; box-sizing: border-box; border: 2px solid #38a0d8; border-radius: 3px; background: linear-gradient(#edf5fa 45%, #c4d8e4 55%); text-align: center; line-height: 19px; font-size: 12.500px; }
			</style>
			<div class="back"></div>
			<div class="frame">
				<div class="dark"></div>
				<div class="cap">提示</div>
				<div class="glass"></div>
				<div class="inner">
					<div class="msg">
						<svg width="32" height="32" viewBox="0 0 32 32" style="flex:none"><defs><radialGradient id="g" cx=".35" cy=".3" r=".8"><stop offset="0" stop-color="#5f86e0"/><stop offset="1" stop-color="#1838a0"/></radialGradient></defs><circle cx="16" cy="16" r="15" fill="url(#g)" stroke="#a8a8a8" stroke-width="2"/><circle cx="16" cy="8" r="2.200" fill="#fff"/><rect x="14" y="12" width="4" height="14" rx="1" fill="#dfe6f4"/></svg>
						<span><slot></slot></span>
					</div>
					<div class="foot"><div class="ok">确定</div></div>
				</div>
			</div>
		`;
	}
}
customElements.define('msg-dialog', MsgDialog);

class NewsPopup extends HTMLElement {
	constructor() {
		super();
		this.attachShadow({ mode: 'open' });
		this.shadowRoot.innerHTML = `
			<style>
				:host { position: absolute; left: 1609px; top: 798px; width: 301px; height: 218px; box-sizing: border-box; display: block; background: #fff; border: 1px solid #1c93de; overflow: hidden; font-size: 12px; }
				.hd { height: 30px; background: #1c93de; color: #fff; display: flex; align-items: center; padding-left: 9px; gap: 13px; font-size: 12.500px; position: relative; }
				.g { width: 17px; height: 17px; background: #fff; border-radius: 3px; color: #1c93de; font: italic 700 15px/17px "Liberation Sans"; text-align: center; }
				.x { position: absolute; right: 4px; top: 8px; display: block; }
				h1 { margin: 10px 0 8px; font: 700 16px/20px ${FONT_STACK}; text-align: center; padding-right: 8px; white-space: nowrap; }
				.l { white-space: nowrap; line-height: 15px; letter-spacing: 1.650px; padding-left: 19px; font-size: 12px; }
				.more { position: absolute; left: 213px; top: 208px; color: #1c7ad8; line-height: 14px; }
				.coin { position: absolute; left: 288px; top: 190px; width: 30px; height: 30px; border-radius: 50%; background: #f08020; border: 1px solid #fff; }
			</style>
			<div class="hd">
				<div class="g">G</div><span>广联达资讯</span>
				<svg class="x" width="13" height="13"><path d="M1 1l11 11M12 1L1 12" stroke="#fff" stroke-width="1.200"/></svg>
			</div>
			<h1>史无前例：0元抢超大大大大云空间</h1>
			<div class="l" style="padding-left:48px">双十一因为买买买倾家荡产？【</div>
			<div class="l">GTJ2018】和【造价云】携手9个广联达产</div>
			<div class="l">品</div>
			<div class="l" style="padding-left:56px">给！你！回！血！啦！</div>
			<div class="l" style="padding-left:56px">岂止全年最低，这次史无前例，马上</div>
			<div class="l">了解吧&gt;&gt;&gt;</div>
			<div class="more">查看详情</div>
			<div class="coin"></div>
		`;
	}
}
customElements.define('news-popup', NewsPopup);
</script>
</body>
</html>
